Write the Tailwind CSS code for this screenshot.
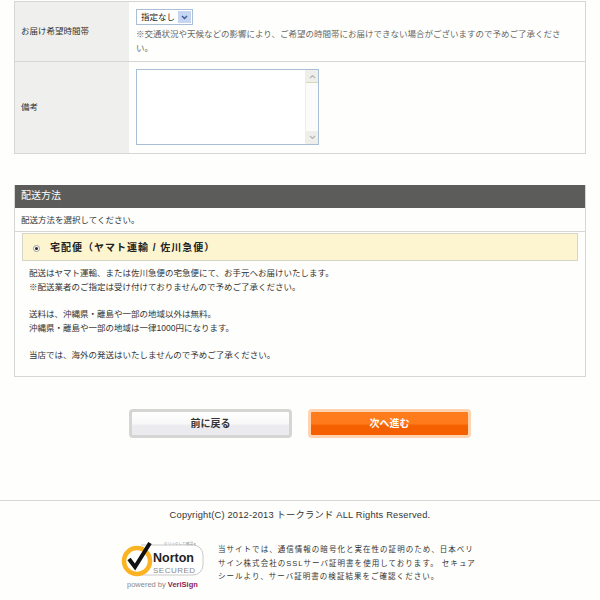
<!DOCTYPE html>
<html lang="ja">
<head>
  <meta charset="UTF-8">
  <title>配送方法</title>
  <script src="https://cdn.jsdelivr.net/npm/@tailwindcss/browser@4"></script>
</head>
<body class="bg-[#fefefc]">
  <div class="h-[600px] w-[600px] overflow-hidden bg-[#fefefc] text-[8.5px] leading-[14px] text-[#333] font-['Liberation_Sans','Noto_Sans_CJK_JP',sans-serif]">

    <!-- お届け情報 -->
    <div class="mx-[14px] mt-px w-[572px] border border-[#d6d6d4]">
      <div class="flex h-[60px] border-b border-[#d6d6d4]">
        <div class="flex w-[114px] items-center bg-[#eff0ee] px-[6px] pb-[2px]">お届け希望時間帯</div>
        <div class="flex-1 pl-[7px] pr-[8px] pt-[7px]">
          <div class="flex h-[16px] w-[57px] items-center justify-between border border-[#a9bfd8] bg-white pl-[4px] pr-px text-[#222]">
            <span>指定なし</span>
            <span class="flex h-[12px] w-[13px] items-center justify-center bg-[#c5d5f2]">
              <svg width="7" height="5" viewBox="0 0 7 5"><path d="M1 1l2.5 2.5L6 1" fill="none" stroke="#3b5a93" stroke-width="1.4"/></svg>
            </span>
          </div>
          <p class="mt-[2px] text-[#666]">※交通状況や天候などの影響により、ご希望の時間帯にお届けできない場合がございますので予めご了承ください。</p>
        </div>
      </div>
      <div class="flex h-[91px]">
        <div class="flex w-[114px] items-center bg-[#eff0ee] px-[6px] pb-[2px]">備考</div>
        <div class="flex-1 pl-[7px] pt-[7px]">
          <div class="flex h-[76px] w-[183px] justify-end border border-[#a9bfd8] bg-white">
            <div class="flex w-[13px] flex-col justify-between border-l border-[#eeeeea] bg-[#fbfbf9]">
              <span class="flex h-[13px] items-center justify-center border-b border-[#d8d8b8] bg-[#eeeeea]">
                <svg width="7" height="5" viewBox="0 0 7 5"><path d="M1 4l2.5-2.5L6 4" fill="none" stroke="#b5b5ad" stroke-width="1.2"/></svg>
              </span>
              <span class="flex h-[13px] items-center justify-center bg-[#eeeeea]">
                <svg width="7" height="5" viewBox="0 0 7 5"><path d="M1 1l2.5 2.5L6 1" fill="none" stroke="#b5b5ad" stroke-width="1.2"/></svg>
              </span>
            </div>
          </div>
        </div>
      </div>
    </div>

    <!-- 配送方法 -->
    <div class="mx-[14px] mt-[31px] h-[192px] w-[572px] border border-t-0 border-[#d6d6d4]">
      <h2 class="flex h-[23px] items-center bg-[#5c5d5a] px-[6px] pb-px text-[10px] font-normal text-white">配送方法</h2>
      <p class="flex h-[24px] items-center border-b border-[#d6d6d4] px-[6px]">配送方法を選択してください。</p>
      <div class="ml-[7px] mt-px flex h-[28px] w-[556px] items-center border border-[#d6d6c8] bg-[#fdf5cf] pl-[10px] pt-[2px] text-[10px] font-bold tracking-[1px] text-[#222]">
        <span class="flex h-[7px] w-[7px] items-center justify-center rounded-full border border-[#999] bg-white">
          <span class="h-[3px] w-[3px] rounded-full bg-[#222]"></span>
        </span>
        <span class="ml-[10px]">宅配便（ヤマト運輸 / 佐川急便）</span>
      </div>
      <div class="pl-[14px] pt-[5px]">
        <p>配送はヤマト運輸、または佐川急便の宅急便にて、お手元へお届けいたします。</p>
        <p>※配送業者のご指定は受け付けておりませんので予めご了承ください。</p>
        <p class="mt-[13px]">送料は、沖縄県・離島や一部の地域以外は無料。</p>
        <p>沖縄県・離島や一部の地域は一律1000円になります。</p>
        <p class="mt-[13px]">当店では、海外の発送はいたしませんので予めご了承ください。</p>
      </div>
    </div>

    <!-- ボタン -->
    <div class="ml-[129px] mt-[32px] flex gap-[16px] text-[10px] font-bold">
      <div class="flex h-[29px] w-[163px] items-center justify-center rounded-[4px] border-[3px] border-[#d5d6d4] bg-[linear-gradient(#ffffff_0%,#f8f8f8_50%,#ebebef_60%,#ebebef_100%)] text-[#333]">前に戻る</div>
      <div class="flex h-[29px] w-[163px] items-center justify-center rounded-[4px] border-[3px] border-[#ffd3b0] bg-[linear-gradient(#ff7d1e_0%,#ff7a1a_50%,#f45f00_60%,#f45f00_100%)] text-white">次へ進む</div>
    </div>

    <!-- フッター -->
    <footer class="mt-[62px] border-t border-[#d6d6d4]">
      <p class="pt-[7px] text-center text-[9.3px] tracking-[0.2px]">Copyright(C) 2012-2013 トークランド ALL Rights Reserved.</p>
      <div class="ml-[121px] mt-[18px] flex">
        <svg width="84" height="56" viewBox="0 0 84 56" class="shrink-0">
          <path d="M20 5 H72 a10 10 0 0 1 10 10 v10 a10 10 0 0 1 -10 10 H20" fill="#fff" stroke="#c9c9c9" stroke-width="1"/>
          <circle cx="16" cy="21" r="13" fill="#fff" stroke="#fbb321" stroke-width="4.5"/>
          <path d="M8 19 l6 8 l15 -24" fill="none" stroke="#111" stroke-width="4"/>
          <text x="59" y="5" text-anchor="middle" font-size="3.7" fill="#999">クリックして確認 ▸</text>
          <text x="32" y="22" font-size="12.5" font-weight="700" font-family="Liberation Sans" fill="#222">Norton</text>
          <text x="32" y="33" font-size="8" letter-spacing="0.5" font-family="Liberation Sans" fill="#888">SECURED</text>
          <text x="6" y="47" font-size="7.5" font-family="Liberation Sans" fill="#8a8a8a">powered by <tspan font-weight="700" fill="#8c1d4e">VeriSign</tspan></text>
        </svg>
        <p class="ml-[13px] mt-[3px] w-[258px] text-[7.5px] leading-[13.5px] tracking-[1.03px]">当サイトでは、通信情報の暗号化と実在性の証明のため、日本ベリサイン株式会社のSSLサーバ証明書を使用しております。 セキュアシールより、サーバ証明書の検証結果をご確認ください。</p>
      </div>
    </footer>
  </div>
</body>
</html>
